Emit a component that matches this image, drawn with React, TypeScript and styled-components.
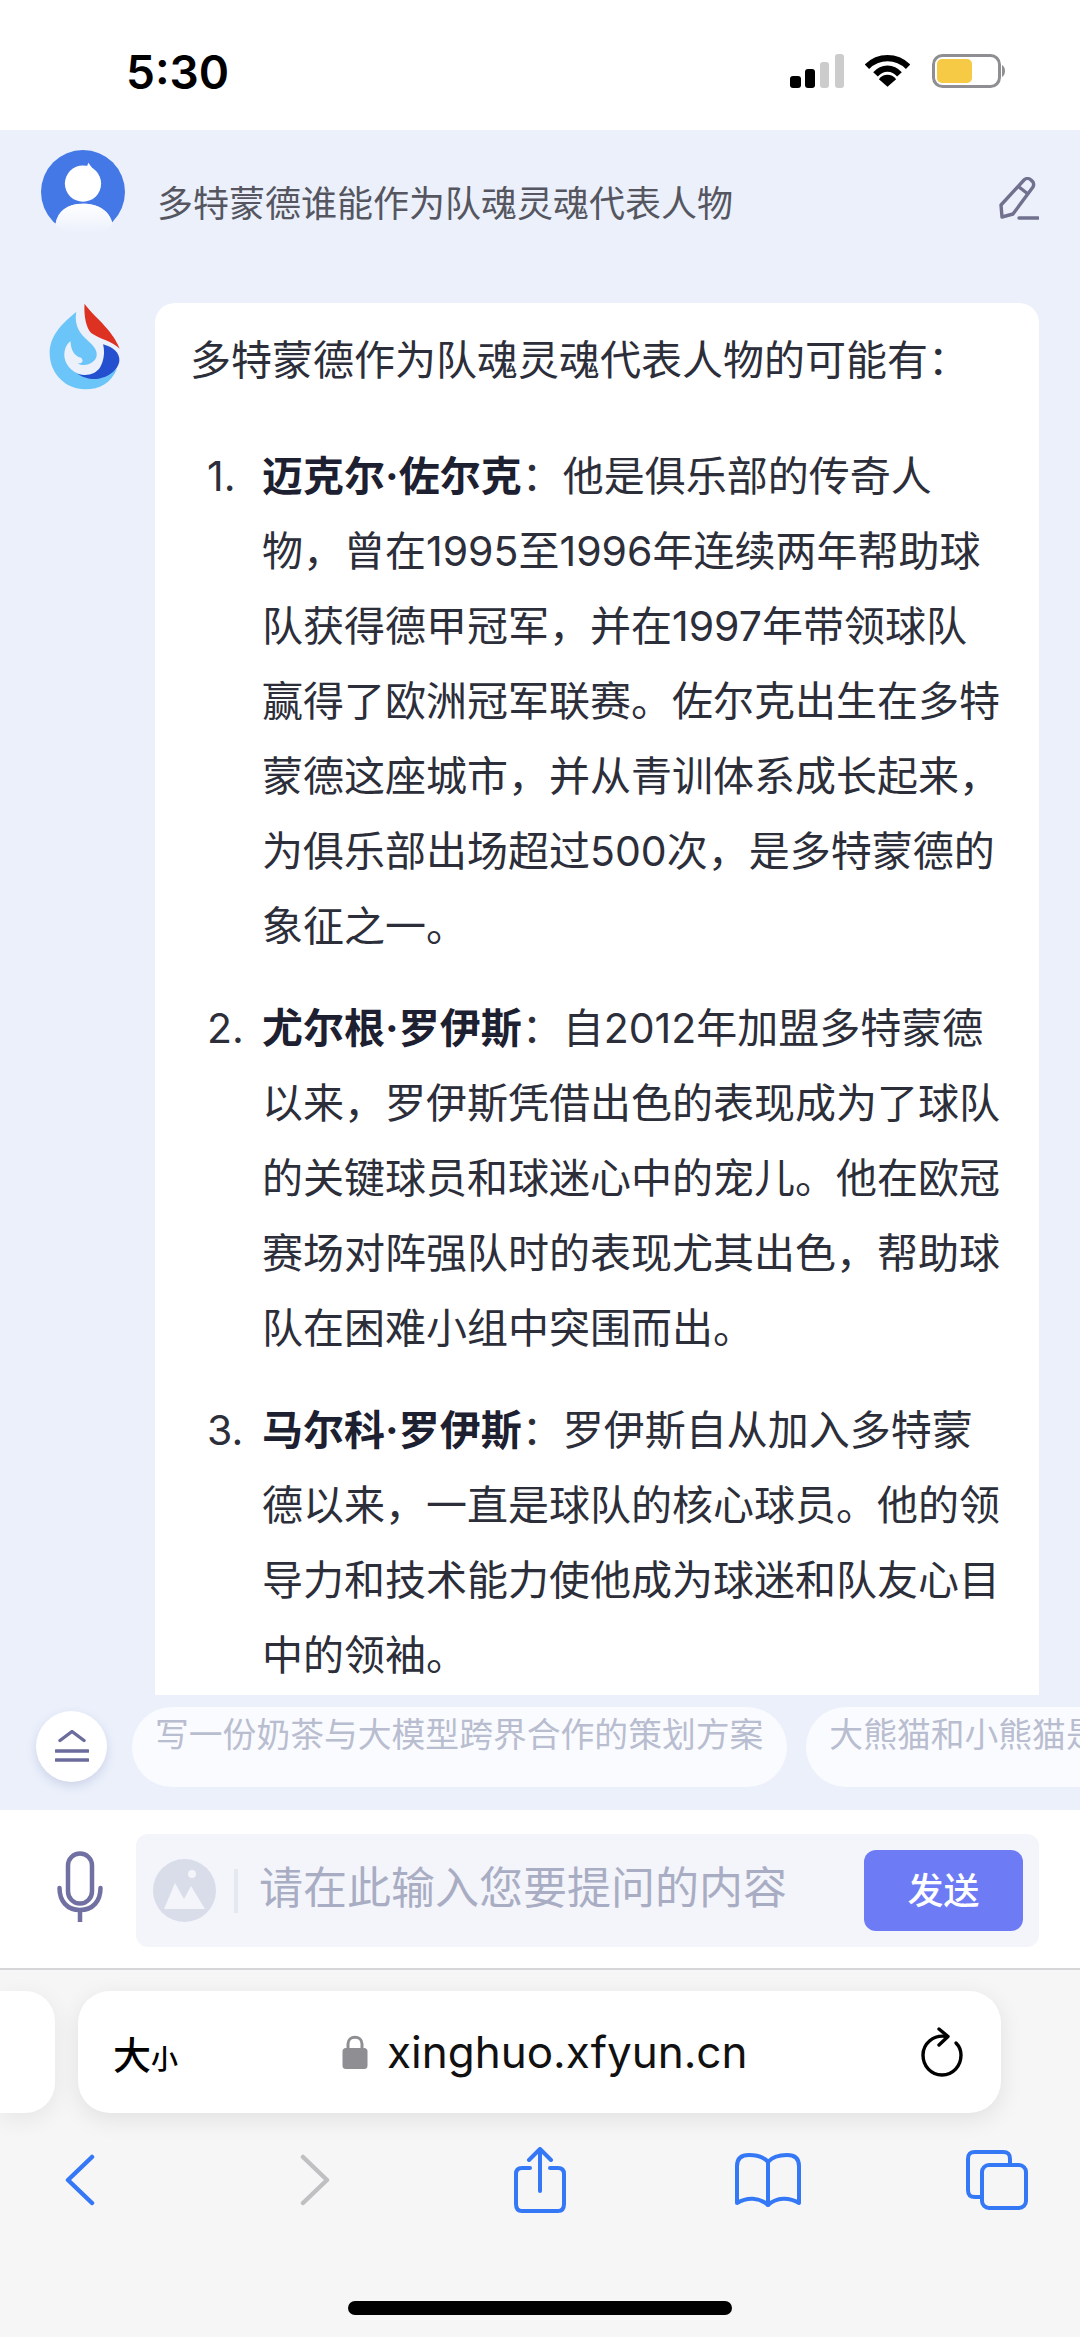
import React from 'react';
import styled, { createGlobalStyle } from 'styled-components';

const GlobalStyle = createGlobalStyle`
  html, body {
    margin: 0;
    padding: 0;
    background: #fff;
  }
  * {
    box-sizing: border-box;
  }
`;

const FONT = `Inter, "Noto Sans CJK SC", "Liberation Sans", sans-serif`;

const Screen = styled.div`
  width: 1080px;
  height: 2337px;
  display: flex;
  flex-direction: column;
  overflow: hidden;
  font-family: ${FONT};
  background: #fff;
`;

const StatusBar = styled.div`
  height: 130px;
  flex: none;
  display: flex;
  align-items: flex-start;
  justify-content: space-between;
  padding: 44px 73px 0 126px;
  background: #fff;
`;

const Time = styled.div`
  font-size: 46px;
  line-height: 56px;
  font-weight: 600;
  color: #000;
`;

const StatusIcons = styled.div`
  display: flex;
  align-items: center;
  gap: 20px;
  margin-top: 10px;
`;

const ChatArea = styled.div`
  height: 1680px;
  flex: none;
  display: flex;
  flex-direction: column;
  background: #ebf0fb;
`;

const Scroller = styled.div`
  flex: 1;
  min-height: 0;
  overflow: hidden;
  padding: 20px 41px 0 41px;
`;

const QuestionRow = styled.div`
  display: flex;
  align-items: flex-start;
  height: 153px;
`;

const QuestionText = styled.div`
  margin: 29px 0 0 32px;
  flex: 1;
  font-size: 36px;
  line-height: 50px;
  color: #55565f;
`;

const EditButton = styled.div`
  margin-top: 27px;
  width: 40px;
  height: 44px;
`;

const AnswerRow = styled.div`
  display: flex;
  align-items: flex-start;
`;

const LogoSlot = styled.div`
  width: 114px;
  padding-left: 7px;
  flex: none;
`;

const AnswerCard = styled.div`
  width: 884px;
  flex: none;
  padding: 20px 20px 40px 35px;
  background: #fff;
  border-radius: 20px;
  color: #2c2e3a;
  font-size: 41px;
  line-height: 75px;
`;

const Lead = styled.p`
  margin: 0 0 41px;
`;

const Items = styled.ol`
  list-style: none;
  margin: 0;
  padding: 0;
`;

const Item = styled.li`
  display: flex;
  margin-bottom: 27px;
`;

const Marker = styled.span`
  width: 72px;
  flex: none;
  padding-left: 17px;
`;

const Line = styled.div`
  white-space: nowrap;
`;

const Strong = styled.strong`
  font-weight: 700;
  color: #1d2030;
`;

const SuggestRow = styled.div`
  height: 115px;
  flex: none;
  display: flex;
  align-items: flex-start;
  gap: 19px;
  padding: 12px 0 0 36px;
  overflow: hidden;
`;

const CollapseButton = styled.div`
  width: 71px;
  height: 71px;
  flex: none;
  margin-top: 4px;
  margin-right: 6px;
  display: flex;
  align-items: center;
  justify-content: center;
  border-radius: 50%;
  background: #fff;
  box-shadow: 0 4px 10px rgba(120, 130, 180, 0.25);
`;

const Bubble = styled.div`
  height: 80px;
  flex: none;
  padding: 0 24px 0 23px;
  border-radius: 40px;
  background: #fafbfe;
  color: #b9bdd0;
  font-size: 33.8px;
  line-height: 56px;
  white-space: nowrap;
`;

const Composer = styled.div`
  height: 160px;
  flex: none;
  display: flex;
  align-items: flex-start;
  padding: 24px 41px 0 57px;
  background: #fff;
  border-bottom: 2px solid #d6d6d9;
`;

const MicSlot = styled.div`
  width: 79px;
  flex: none;
  padding-top: 17px;
`;

const InputBox = styled.div`
  flex: 1;
  height: 113px;
  display: flex;
  align-items: center;
  padding: 0 16px 0 17px;
  border-radius: 12px;
  background: #f4f5fa;
`;

const PickerDivider = styled.div`
  width: 4px;
  height: 44px;
  margin: 0 21px 0 18px;
  background: #e6e8f0;
`;

const Placeholder = styled.div`
  flex: 1;
  padding-bottom: 6px;
  font-size: 44px;
  line-height: 56px;
  color: #a9adc4;
  white-space: nowrap;
`;

const SendButton = styled.div`
  width: 159px;
  height: 81px;
  display: flex;
  align-items: center;
  justify-content: center;
  padding-bottom: 5px;
  border-radius: 12px;
  background: #6d7bf5;
  color: #fff;
  font-size: 36px;
  font-weight: 500;
`;

const Browser = styled.div`
  flex: 1;
  display: flex;
  flex-direction: column;
  background: #f6f6f7;
`;

const TabRow = styled.div`
  display: flex;
  gap: 23px;
  padding-top: 21px;
`;

const TabPeek = styled.div`
  width: 55px;
  height: 122px;
  background: #fff;
  border-radius: 0 30px 30px 0;
  box-shadow: 0 6px 24px rgba(0, 0, 0, 0.07);
`;

const AddressBar = styled.div`
  width: 923px;
  height: 122px;
  display: flex;
  align-items: center;
  padding: 0 38px 0 35px;
  background: #fff;
  border-radius: 32px;
  box-shadow: 0 6px 24px rgba(0, 0, 0, 0.09);
`;

const TextSize = styled.div`
  width: 229px;
  display: flex;
  align-items: baseline;
  font-weight: 500;
  color: #000;
  font-size: 38px;
`;

const SmallGlyph = styled.span`
  font-size: 27px;
`;

const Url = styled.div`
  flex: 1;
  display: flex;
  align-items: center;
  gap: 19px;
  font-size: 44px;
  color: #111;
`;

const Toolbar = styled.div`
  display: grid;
  grid-template-columns: 70px 399px 52px 404px 54px;
  align-items: center;
  justify-items: center;
  height: 66px;
  margin-top: 34px;
  padding-left: 45px;
`;

const HomeBar = styled.div`
  width: 384px;
  height: 14px;
  margin: 88px auto 0;
  border-radius: 7px;
  background: #000;
`;

const Avatar = () => (
  <svg width="84" height="84" viewBox="35 30 250 250">
    <defs>
      <linearGradient id="body" x1="0" y1="0" x2="0" y2="1">
        <stop offset="0" stopColor="#ffffff" />
        <stop offset="1" stopColor="#ebf0fb" />
      </linearGradient>
    </defs>
    <circle cx="160" cy="155" r="125" fill="#4478e6" />
    <path d="M60 285 H260 L248 250 C240 210 205 190 160 190 C115 190 85 210 78 250 Z" fill="#ebf0fb" />
    <path d="M78 252 C84 212 115 190 160 190 C205 190 240 212 248 252 C225 285 100 290 78 252 Z" fill="url(#body)" />
    <circle cx="160" cy="130" r="54" fill="#fff" />
    <path d="M172 78 L176 68 L192 90 Z" fill="#fff" />
  </svg>
);

const Logo = () => (
  <svg width="73" height="87" viewBox="50 40 220 262">
    <path
      d="M135 67 C100 95 55 135 55 190 C55 255 105 300 162 300 C205 300 240 282 258 238 C225 262 180 268 140 252 C110 240 95 210 100 185 C103 170 110 160 118 155 C118 178 128 200 150 205 C158 215 155 222 140 222 C160 232 185 225 195 205 C202 188 190 170 172 155 C148 135 128 110 135 67 Z"
      fill="#6cc5f8"
    />
    <path d="M216 164 C245 172 268 190 265 215 C260 250 215 275 175 268 C160 265 148 260 138 253 C165 262 195 255 208 232 C218 212 222 190 216 164 Z" fill="#2450cf" />
    <path d="M160 42 C185 78 245 120 266 178 C245 155 205 148 180 130 C165 115 158 80 160 42 Z" fill="#dd3222" />
  </svg>
);

const App: React.FC = () => (
  <>
    <GlobalStyle />
    <Screen>
      <StatusBar>
        <Time>5:30</Time>
        <StatusIcons>
          <svg width="55" height="34" viewBox="0 0 55 34">
            <rect x="0" y="22" width="11" height="12" rx="3" fill="#000" />
            <rect x="15" y="15" width="10" height="19" rx="3" fill="#000" />
            <rect x="30" y="8" width="9" height="26" rx="3" fill="#ccc" />
            <rect x="45" y="0" width="9" height="34" rx="3" fill="#ccc" />
          </svg>
          <svg width="45" height="34" viewBox="0 0 47 35">
            <path d="M2 13 C14 1 33 1 45 13" fill="none" stroke="#000" strokeWidth="6.5" />
            <path d="M11 21 C18 13 29 13 36 21" fill="none" stroke="#000" strokeWidth="6.5" />
            <path d="M23.5 34 L14.5 26 C19 20 28 20 32.5 26 Z" fill="#000" />
          </svg>
          <svg width="77" height="34" viewBox="-2 0 77 34">
            <rect x="1.5" y="1.5" width="66" height="31" rx="9" fill="#fff" stroke="#8e8e93" strokeWidth="3" />
            <rect x="5" y="5" width="35" height="24" rx="5" fill="#f6ca44" />
            <path d="M70 11 C74 13 74 21 70 23 Z" fill="#8e8e93" />
          </svg>
        </StatusIcons>
      </StatusBar>

      <ChatArea>
        <Scroller>
          <QuestionRow>
            <Avatar />
            <QuestionText>多特蒙德谁能作为队魂灵魂代表人物</QuestionText>
            <EditButton>
              <svg width="40" height="44" viewBox="0 0 40 44" fill="none" stroke="#71718f" strokeWidth="3.4" strokeLinejoin="round">
                <path d="M25 3 C27 1 30 1 32 3 L34 5 C35 7 35 8 34 10 L14 37 L3 40 L2 28 Z" />
                <path d="M20 10 L29 17" />
                <path d="M20 41 H39" strokeLinecap="round" />
              </svg>
            </EditButton>
          </QuestionRow>

          <AnswerRow>
            <LogoSlot>
              <Logo />
            </LogoSlot>
            <AnswerCard>
              <Lead>多特蒙德作为队魂灵魂代表人物的可能有：</Lead>
              <Items>
                <Item>
                  <Marker>1.</Marker>
                  <div>
                    <Line>
                      <Strong>迈克尔·佐尔克</Strong>：他是俱乐部的传奇人
                    </Line>
                    <Line>物，曾在1995至1996年连续两年帮助球</Line>
                    <Line>队获得德甲冠军，并在1997年带领球队</Line>
                    <Line>赢得了欧洲冠军联赛。佐尔克出生在多特</Line>
                    <Line>蒙德这座城市，并从青训体系成长起来，</Line>
                    <Line>为俱乐部出场超过500次，是多特蒙德的</Line>
                    <Line>象征之一。</Line>
                  </div>
                </Item>
                <Item>
                  <Marker>2.</Marker>
                  <div>
                    <Line>
                      <Strong>尤尔根·罗伊斯</Strong>：自2012年加盟多特蒙德
                    </Line>
                    <Line>以来，罗伊斯凭借出色的表现成为了球队</Line>
                    <Line>的关键球员和球迷心中的宠儿。他在欧冠</Line>
                    <Line>赛场对阵强队时的表现尤其出色，帮助球</Line>
                    <Line>队在困难小组中突围而出。</Line>
                  </div>
                </Item>
                <Item>
                  <Marker>3.</Marker>
                  <div>
                    <Line>
                      <Strong>马尔科·罗伊斯</Strong>：罗伊斯自从加入多特蒙
                    </Line>
                    <Line>德以来，一直是球队的核心球员。他的领</Line>
                    <Line>导力和技术能力使他成为球迷和队友心目</Line>
                    <Line>中的领袖。</Line>
                  </div>
                </Item>
              </Items>
            </AnswerCard>
          </AnswerRow>
        </Scroller>

        <SuggestRow>
          <CollapseButton>
            <svg width="34" height="34" viewBox="0 0 34 34" fill="none" stroke="#6c6c9c" strokeWidth="3.4" strokeLinecap="round">
              <path d="M5 10.5 L17 1.5 L29 10.5" strokeLinejoin="round" />
              <path d="M1 21 H33" />
              <path d="M1 30 H33" />
            </svg>
          </CollapseButton>
          <Bubble>写一份奶茶与大模型跨界合作的策划方案</Bubble>
          <Bubble>大熊猫和小熊猫是什么关系</Bubble>
        </SuggestRow>
      </ChatArea>

      <Composer>
        <MicSlot>
          <svg width="46" height="73" viewBox="0 0 46 73" fill="none" stroke="#7070a2" strokeWidth="4.5" strokeLinecap="round">
            <rect x="11" y="2.5" width="24" height="50" rx="12" />
            <path d="M2.5 37 C2.5 50 10 59 23 59 C36 59 43.5 50 43.5 37" />
            <path d="M23 59 V71" strokeLinecap="butt" />
          </svg>
        </MicSlot>
        <InputBox>
          <svg width="63" height="63" viewBox="0 0 63 63">
            <circle cx="31.5" cy="31.5" r="31.5" fill="#d9dce9" />
            <circle cx="39" cy="15" r="4" fill="#f4f5fa" />
            <path d="M11 50 L22 24 L31 40 L38 27 L52 50 Z" fill="#f4f5fa" />
          </svg>
          <PickerDivider />
          <Placeholder>请在此输入您要提问的内容</Placeholder>
          <SendButton>发送</SendButton>
        </InputBox>
      </Composer>

      <Browser>
        <TabRow>
          <TabPeek />
          <AddressBar>
            <TextSize>
              大<SmallGlyph>小</SmallGlyph>
            </TextSize>
            <Url>
              <svg width="26" height="36" viewBox="0 0 26 36">
                <path d="M6 16 V10 C6 1 20 1 20 10 V16" fill="none" stroke="#8e8e93" strokeWidth="3" />
                <rect x="0.5" y="14" width="25" height="21" rx="3.5" fill="#8e8e93" />
              </svg>
              xinghuo.xfyun.cn
            </Url>
            <svg width="42" height="50" viewBox="0 0 42 50" fill="none" stroke="#000" strokeWidth="3.4" strokeLinecap="round" strokeLinejoin="round">
              <path d="M26 9.5 C12 7 2 17 2 28 C2 39 10 48 21 48 C32 48 40 39 40 28 C40 23 38 19 35 16" />
              <path d="M18 2 L27 9.5 L18 18" />
            </svg>
          </AddressBar>
        </TabRow>

        <Toolbar>
          <svg width="30" height="52" viewBox="0 0 30 52" fill="none" stroke="#3478f6" strokeWidth="4.5" strokeLinecap="round" strokeLinejoin="round">
            <path d="M27 3 L3 26 L27 49" />
          </svg>
          <svg width="30" height="52" viewBox="0 0 30 52" fill="none" stroke="#c0c0c3" strokeWidth="4.5" strokeLinecap="round" strokeLinejoin="round">
            <path d="M3 3 L27 26 L3 49" />
          </svg>
          <svg width="52" height="66" viewBox="0 0 52 66" fill="none" stroke="#3478f6" strokeWidth="4" strokeLinecap="round" strokeLinejoin="round">
            <path d="M16 21 H8 C4 21 2 23 2 27 V57 C2 62 4 64 8 64 H44 C48 64 50 62 50 57 V27 C50 23 48 21 44 21 H36" />
            <path d="M26 44 V3" />
            <path d="M15 13 L26 2 L37 13" />
          </svg>
          <svg width="66" height="54" viewBox="0 0 66 54" fill="none" stroke="#3478f6" strokeWidth="4" strokeLinecap="round" strokeLinejoin="round">
            <path d="M33 9 C28 3 20 2 14 2 C6 2 2 6 2 13 V50 C12 44 24 44 33 52 C42 44 54 44 64 50 V13 C64 6 60 2 52 2 C46 2 38 3 33 9 Z" />
            <path d="M33 9 V52" />
          </svg>
          <svg width="62" height="60" viewBox="0 0 62 60" fill="none" stroke="#3478f6" strokeWidth="4">
            <path d="M17 47 H9 C4 47 2 45 2 40 V9 C2 4 4 2 9 2 H37 C42 2 44 4 44 9 V15" />
            <rect x="16" y="15" width="44" height="43" rx="7" />
          </svg>
        </Toolbar>
        <HomeBar />
      </Browser>
    </Screen>
  </>
);

export default App;
